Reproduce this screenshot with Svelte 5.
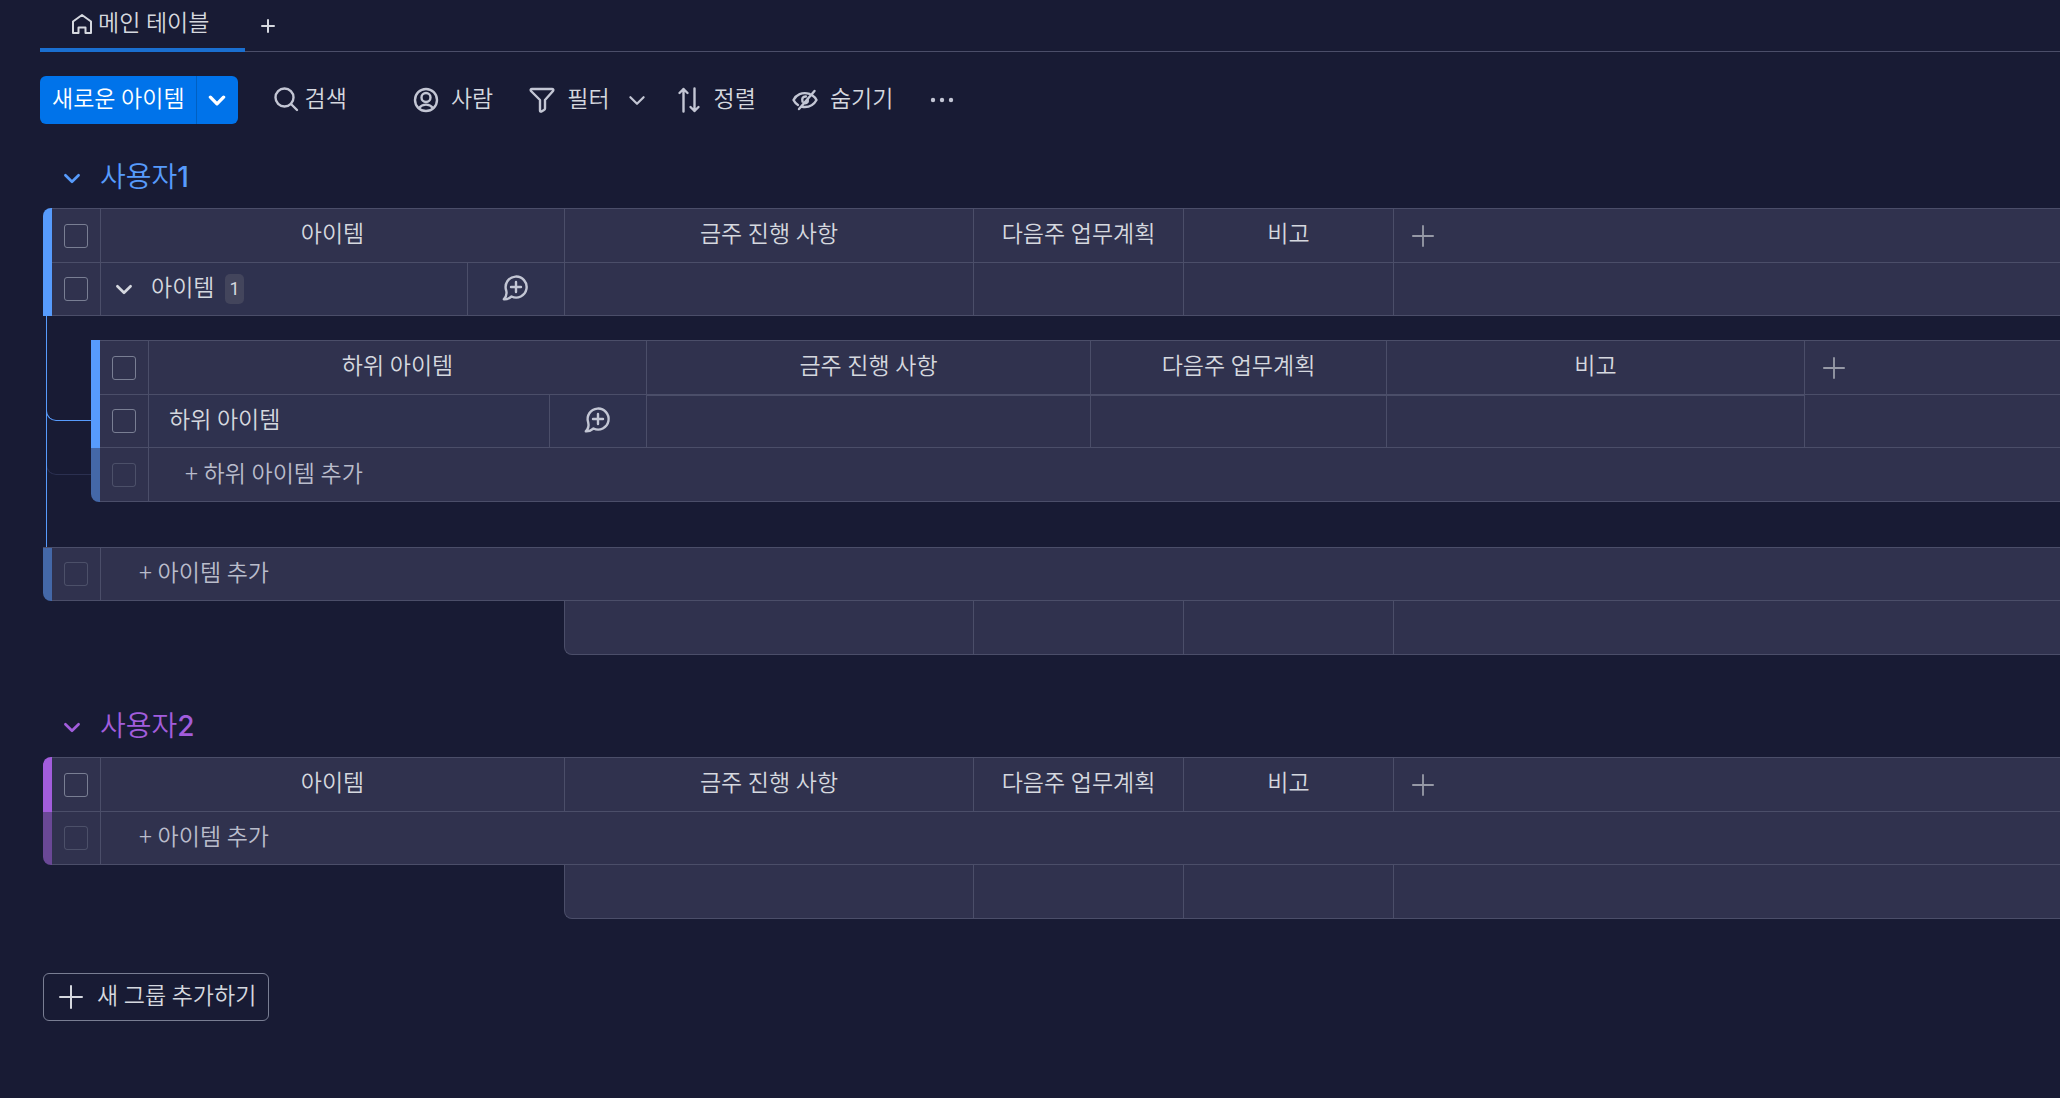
<script>
  const columns = ['금주 진행 사항', '다음주 업무계획', '비고'];
  const groups = [
    {
      name: '사용자',
      number: 1,
      tone: 'blue',
      items: [{ name: '아이템', children: [{ name: '하위 아이템' }] }]
    },
    { name: '사용자', number: 2, tone: 'purple', items: [] }
  ];
</script>

{#snippet chevron()}
  <svg class="chevron" viewBox="0 0 16 10" aria-hidden="true"><path d="M2 2l6 6 6-6" /></svg>
{/snippet}

{#snippet plus()}
  <svg class="plus" viewBox="0 0 24 24" aria-hidden="true"><path d="M12 1v22M1 12h22" /></svg>
{/snippet}

{#snippet chat()}
  <button class="chat" aria-label="대화 시작">
    <svg viewBox="0 0 28 28" aria-hidden="true">
      <path d="M5.200 16.500A10.500 10.500 0 1 1 10.500 22.500C8.500 24.200 5.500 25.500 2.800 25.300 5 23 6 19.500 5.200 16.500zM15 8v10M10 13h10" />
    </svg>
  </button>
{/snippet}

{#snippet headings(first)}
  <tr class="head">
    <td class="bar first"></td>
    <td class="check"><input type="checkbox" aria-label="모두 선택" /></td>
    <th colspan="2">{first}</th>
    {#each columns as column}
      <th>{column}</th>
    {/each}
    <td class="more"><button aria-label="열 추가">{@render plus()}</button></td>
  </tr>
{/snippet}

<nav class="tabs">
  <a class="tab" href="#main" aria-current="page">
    <svg viewBox="0 0 22 22" aria-hidden="true">
      <path d="M2 8.500L11 2l9 6.500V20h-5.500v-5.500h-7V20H2z" />
    </svg>
    메인 테이블
  </a>
  <button class="add-tab" aria-label="보기 추가">
    <svg viewBox="0 0 14 14" aria-hidden="true"><path d="M7 1v12M1 7h12" /></svg>
  </button>
</nav>

<main>
  <div class="toolbar">
    <div class="split">
      <button class="new">새로운 아이템</button>
      <button class="drop" aria-label="옵션 더 보기">{@render chevron()}</button>
    </div>
    <button class="tool search">
      <svg viewBox="0 0 26 26" aria-hidden="true"><circle cx="11.500" cy="10.500" r="9" /><path d="M18 17l6 6" /></svg>
      검색
    </button>
    <button class="tool person">
      <svg viewBox="0 0 26 26" aria-hidden="true">
        <circle cx="13" cy="13" r="11" /><circle cx="13" cy="10.500" r="4.500" /><path d="M6 21c3.500-4.500 10.500-4.500 14 0" />
      </svg>
      사람
    </button>
    <button class="tool filter">
      <svg viewBox="0 0 26 26" aria-hidden="true">
        <path d="M3 2h20q2 0 1 2l-8 9v8.500q0 1-1 1.500l-2.500 1.500q-1.500 .5-1.500-1V13L2 4Q1 2 3 2z" />
      </svg>
      필터
    </button>
    <button class="tool filter-more" aria-label="필터 옵션">{@render chevron()}</button>
    <button class="tool sort">
      <svg viewBox="0 0 26 26" aria-hidden="true"><path d="M7.500 24.500V2M3.500 6L7.500 2l4 4M18.500 1.500V24M14.500 20l4 4 4-4" /></svg>
      정렬
    </button>
    <button class="tool hide">
      <svg viewBox="0 0 26 26" aria-hidden="true">
        <path d="M20.500 8.500c2 1.300 3.300 3 4 4.500-2.500 4.500-6.500 7-11.500 7-1.500 0-2.500-.2-3.500-.5M17.500 6.900C10 4.500 4 8 1.500 13c1 2 2.500 3.800 4.500 5M22.500 4L7 22M14 9.500c-3-.3-4.500 2-3.500 5M15.800 12.500c.2 2-.8 3.500-2.800 3.700" />
      </svg>
      숨기기
    </button>
    <button class="tool dots" aria-label="더 보기">
      <svg viewBox="0 0 26 26" aria-hidden="true"><circle cx="4" cy="13" r="2.200" /><circle cx="13" cy="13" r="2.200" /><circle cx="22" cy="13" r="2.200" /></svg>
    </button>
  </div>

  {#each groups as group}
    <section class={group.tone}>
      <h2>
        <button aria-label="그룹 접기">{@render chevron()}</button>
        <span>{group.name}<span class="number">{group.number}</span></span>
      </h2>
      <table>
        <colgroup>
          <col class="c-bar" /><col class="c-check" /><col class="c-name" /><col class="c-chat" />
          <col class="c-progress" /><col class="c-plan" /><col class="c-note" /><col />
        </colgroup>
        <thead>{@render headings('아이템')}</thead>
        <tbody>
          {#each group.items as item}
            <tr class="item">
              <td class="bar"></td>
              <td class="check"><input type="checkbox" aria-label={item.name} /></td>
              <td class="name">
                <div class="parent">
                  <button aria-label="하위 아이템 접기">{@render chevron()}</button>
                  {item.name}
                  <span class="count">{item.children.length}</span>
                </div>
              </td>
              <td class="talk">{@render chat()}</td>
              <td></td><td></td><td></td><td></td>
            </tr>
            <tr class="nest">
              <td colspan="8">
                <span class="branch faint"></span>
                <span class="branch"></span>
                <span class="trunk"></span>
                <table class="sub">
                  <colgroup>
                    <col class="c-bar" /><col class="c-check" /><col class="s-name" /><col class="c-chat" />
                    <col class="s-progress" /><col class="s-plan" /><col class="s-note" /><col />
                  </colgroup>
                  <thead>{@render headings('하위 아이템')}</thead>
                  <tbody>
                    {#each item.children as child}
                      <tr class="item">
                        <td class="bar"></td>
                        <td class="check"><input type="checkbox" aria-label={child.name} /></td>
                        <td class="name">{child.name}</td>
                        <td class="talk">{@render chat()}</td>
                        <td class="value"></td><td class="value"></td><td class="value"></td><td></td>
                      </tr>
                    {/each}
                    <tr class="add">
                      <td class="bar last"></td>
                      <td class="check"><input type="checkbox" disabled aria-label="새 하위 아이템" /></td>
                      <td class="adder" colspan="6"><button>+ 하위 아이템 추가</button></td>
                    </tr>
                  </tbody>
                </table>
              </td>
            </tr>
          {/each}
          <tr class="add">
            <td class="bar last"></td>
            <td class="check"><input type="checkbox" disabled aria-label="새 아이템" /></td>
            <td class="adder" colspan="6"><button>+ 아이템 추가</button></td>
          </tr>
        </tbody>
        <tfoot>
          <tr>
            <td class="blank" colspan="4"></td>
            <td class="corner"></td><td></td><td></td><td></td>
          </tr>
        </tfoot>
      </table>
    </section>
  {/each}

  <button class="new-group">{@render plus()}새 그룹 추가하기</button>
</main>

<style>
  :global(body) {
    background: #181b34;
    color: #d5d8df;
    font-family: Roboto, 'Noto Sans CJK KR', sans-serif;
    font-size: 23px;
    font-weight: 350;
    line-height: 32px;
    overflow-x: hidden;
  }
  button {
    margin: 0;
    padding: 0;
    border: 0;
    background: none;
    color: inherit;
    font: inherit;
    display: flex;
    align-items: center;
    cursor: pointer;
  }
  svg {
    display: block;
    flex: none;
    fill: none;
    stroke: currentColor;
    stroke-width: 2;
    stroke-linecap: round;
    stroke-linejoin: round;
  }
  .chevron {
    width: 18px;
    height: 11px;
  }
  .plus {
    width: 24px;
    height: 24px;
  }

  .tabs {
    display: flex;
    height: 51px;
    margin-left: 40px;
    border-bottom: 1px solid #4b4e69;
  }
  .tab {
    display: flex;
    gap: 5px;
    height: 48px;
    padding: 0 36px 0 31px;
    align-items: center;
    border-bottom: 4px solid #1a6fd0;
    color: inherit;
    text-decoration: none;
  }
  .tab svg {
    width: 22px;
    height: 22px;
  }
  .add-tab {
    padding: 0 16px;
  }
  .add-tab svg {
    width: 14px;
    height: 14px;
  }

  .toolbar {
    display: flex;
    align-items: center;
    height: 48px;
    padding: 24px 0 0 40px;
  }
  .split {
    display: flex;
    height: 48px;
    border-radius: 6px;
    background: #0073ea;
    color: #fff;
  }
  .new {
    padding: 0 11px 0 12px;
  }
  .drop {
    width: 42px;
    justify-content: center;
    border-left: 1px solid #0060c2;
  }
  .drop .chevron {
    stroke-width: 3;
  }
  .tool svg {
    width: 26px;
    height: 26px;
    color: #c3c6d4;
    stroke-width: 2.400;
  }
  .tool .chevron {
    width: 18px;
    height: 11px;
    stroke-width: 2;
  }
  .tool {
    gap: 12px;
  }
  .search {
    gap: 6px;
    margin-left: 35px;
  }
  .person {
    margin-left: 66px;
  }
  .filter {
    margin-left: 36px;
  }
  .filter-more {
    margin-left: 18px;
  }
  .sort {
    margin-left: 30px;
  }
  .hide {
    margin-left: 36px;
  }
  .dots {
    margin-left: 36px;
  }
  .dots svg {
    fill: currentColor;
    stroke: none;
  }

  section {
    padding-left: 43px;
  }
  h2 {
    display: flex;
    align-items: center;
    gap: 19px;
    margin: 34px 0 10px;
    padding-left: 20px;
    font-size: 28px;
    font-weight: 350;
    line-height: 40px;
  }
  section + section h2 {
    margin-top: 52px;
  }
  h2 .chevron {
    stroke-width: 2.400;
  }
  .number {
    font-family: Inter, sans-serif;
    font-weight: 500;
    line-height: 1;
  }
  .blue {
    --tone: #579bfc;
    --dim: #4468a8;
  }
  .purple {
    --tone: #a25ddc;
    --dim: #6a4896;
  }
  h2 {
    color: var(--tone);
  }

  table {
    width: 100%;
    table-layout: fixed;
    border-collapse: separate;
    border-spacing: 0;
  }
  .c-bar { width: 9px; }
  .c-check { width: 48px; }
  .c-name { width: 367px; }
  .c-chat { width: 97px; }
  .c-progress { width: 409px; }
  .c-plan { width: 210px; }
  .c-note { width: 210px; }
  .s-name { width: 401px; }
  .s-progress { width: 444px; }
  .s-plan { width: 296px; }
  .s-note { width: 418px; }

  td,
  th {
    box-sizing: border-box;
    height: 53px;
    padding: 0;
    border: 0 solid #4b4e69;
    border-width: 0 0 1px 1px;
    background: #30324e;
    font-weight: 350;
    text-align: center;
  }
  .head td,
  .head th {
    height: 55px;
    border-top-width: 1px;
  }
  .head th {
    padding-bottom: 2px;
  }
  .check {
    border-left: 0;
  }
  td.bar,
  .head td.bar {
    border: 0;
    background: var(--tone);
  }
  .add td.bar {
    background: var(--dim);
  }
  table:not(.sub) > thead .first {
    border-top-left-radius: 8px;
  }
  .last {
    border-bottom-left-radius: 8px;
  }
  input {
    display: block;
    appearance: none;
    box-sizing: border-box;
    width: 24px;
    height: 24px;
    margin: 0 auto;
    border: 1px solid #797e93;
    border-radius: 3px;
  }
  input:disabled {
    opacity: 0.4;
  }
  .more button {
    padding-left: 18px;
    color: #9699a6;
  }
  .more .plus {
    width: 22px;
    height: 22px;
  }
  .item .name,
  .item .talk {
    background: #2f324f;
  }
  td.name {
    text-align: left;
  }
  .sub .name {
    padding-left: 20px;
  }
  .parent {
    display: flex;
    align-items: center;
    padding-left: 14px;
  }
  .parent button {
    margin-right: 18px;
  }
  .parent .chevron {
    stroke-width: 2.400;
  }
  .count {
    margin-left: 11px;
    padding: 0 4px;
    border-radius: 5px;
    background: #43455c;
    font-size: 18px;
    font-weight: 400;
    line-height: 30px;
  }
  .chat {
    margin: 0 auto;
    padding: 0 3px 3px 0;
    color: #c3c6d4;
  }
  .chat svg {
    width: 28px;
    height: 28px;
    stroke-width: 2.400;
  }
  .sub .value {
    border-top-width: 1px;
  }
  .add .adder button {
    padding-left: 38px;
    color: #b9bccb;
  }
  .sub .add .adder button {
    padding-left: 36px;
  }
  .sub .add td {
    height: 54px;
  }

  .nest > td {
    position: relative;
    padding: 24px 0 45px 48px;
    border-left: 0;
    background: none;
  }
  .trunk,
  .branch {
    position: absolute;
    top: 0;
    left: 3px;
    box-sizing: border-box;
    border-left: 1px solid var(--tone);
  }
  .trunk {
    bottom: 0;
  }
  .branch {
    width: 45px;
    height: 105px;
    border-bottom: 1px solid var(--tone);
    border-bottom-left-radius: 10px;
  }
  .faint {
    height: 159px;
    border-color: #2b3050;
  }

  tfoot td {
    height: 54px;
  }
  td.blank {
    border: 0;
    background: none;
  }
  .corner {
    border-bottom-left-radius: 8px;
  }

  .new-group {
    box-sizing: border-box;
    height: 48px;
    margin: 54px 0 77px 43px;
    padding: 0 12px 0 15px;
    gap: 14px;
    border: 1px solid #797e93;
    border-radius: 6px;
  }
</style>
